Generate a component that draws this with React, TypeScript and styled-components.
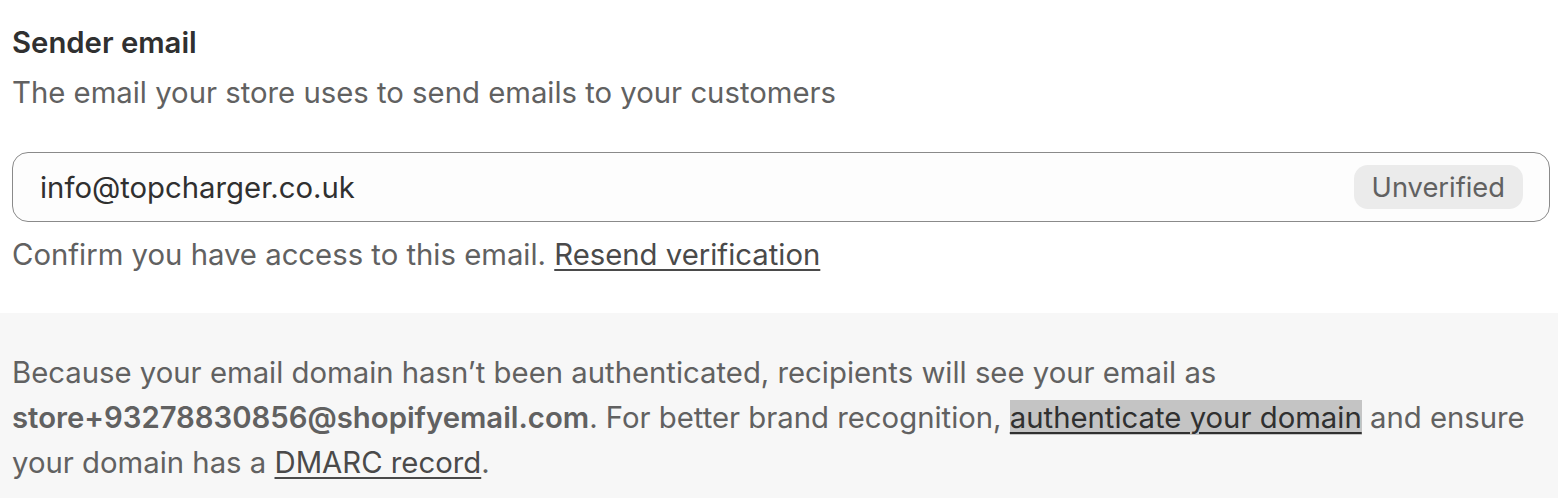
import React from "react";
import styled, { createGlobalStyle } from "styled-components";

const GlobalStyle = createGlobalStyle`
  html, body {
    margin: 0;
    padding: 0;
    background: #ffffff;
  }
  body {
    font-family: Inter, "Noto Sans", sans-serif;
    -webkit-font-smoothing: antialiased;
  }
`;

function App() {
  return (
    <>
      <GlobalStyle />
      <S.Page>
        <S.Section>
          <S.Title>Sender email</S.Title>
          <S.Text>The email your store uses to send emails to your customers</S.Text>

          <S.Field>
            <S.FieldValue>info@topcharger.co.uk</S.FieldValue>
            <S.Badge>Unverified</S.Badge>
          </S.Field>

          <S.HelpText>
            Confirm you have access to this email. <S.Link href="#">Resend verification</S.Link>
          </S.HelpText>
        </S.Section>

        <S.Notice>
          <S.Text>
            Because your email domain hasn’t been authenticated, recipients will see your email as{" "}
            <b>store+93278830856@shopifyemail.com</b>. For better brand recognition,{" "}
            <S.Link href="#" $highlighted>authenticate your domain</S.Link> and ensure your domain has a{" "}
            <S.Link href="#">DMARC record</S.Link>.
          </S.Text>
        </S.Notice>
      </S.Page>
    </>
  );
}

const S = {
  Page: styled.div`
    width: 1558px;
    display: flex;
    flex-direction: column;
  `,

  Section: styled.div`
    padding: 20px 8px 36px 12px;
    display: flex;
    flex-direction: column;
  `,

  Title: styled.h2`
    margin: 0;
    font-size: 29.3px;
    line-height: 45px;
    font-weight: 560;
    color: #303030;
  `,

  Text: styled.p`
    margin: 5px 0 0;
    font-size: 29.3px;
    line-height: 45px;
    font-weight: 400;
    color: #616161;

    & > b {
      font-weight: 600;
    }
  `,

  Field: styled.div`
    margin-top: 37px;
    height: 70px;
    box-sizing: border-box;
    border: 1px solid #8a8a8a;
    border-radius: 16px;
    background: #fdfdfd;
    padding: 0 26px 0 27px;
    display: flex;
    align-items: center;
    justify-content: space-between;
  `,

  FieldValue: styled.span`
    font-size: 29.3px;
    color: #303030;
  `,

  Badge: styled.span`
    height: 44px;
    padding: 0 18px;
    display: inline-flex;
    align-items: center;
    border-radius: 14px;
    background: #ebebeb;
    color: #616161;
    font-size: 27.3px;
  `,

  HelpText: styled.p`
    margin: 10px 0 0;
    font-size: 29.3px;
    line-height: 45px;
    color: #616161;
  `,

  Link: styled.a<{ $highlighted?: boolean }>`
    color: ${(p) => (p.$highlighted ? "#303030" : "#4a4a4a")};
    text-decoration: underline;
    text-decoration-thickness: 2px;
    text-underline-offset: 4px;
    background: ${(p) => (p.$highlighted ? "#c4c4c4" : "transparent")};
  `,

  Notice: styled.div`
    background: #f7f7f7;
    padding: 37px 12px 14px;

    & > p {
      margin: 0;
    }
  `,
};

export default App;
